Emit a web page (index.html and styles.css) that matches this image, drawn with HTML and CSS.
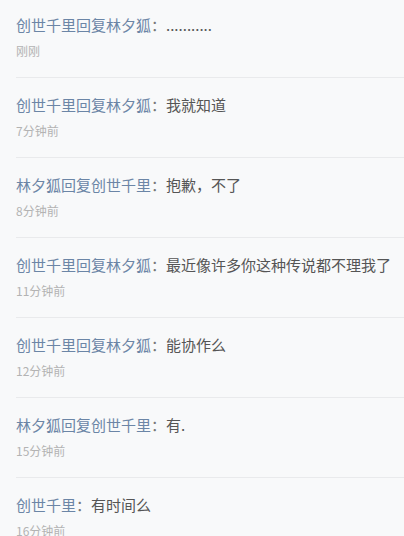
FILE: index.html
```html
<!DOCTYPE html>
<html lang="zh">
<head>
<meta charset="utf-8">
<link rel="stylesheet" href="styles.css">
</head>
<body>
<ul class="list">
  <li class="item">
    <p class="line"><span class="name">创世千里回复林夕狐</span><span class="colon">：</span><span class="msg">...........</span></p>
    <p class="time">刚刚</p>
  </li>
  <li class="item">
    <p class="line"><span class="name">创世千里回复林夕狐</span><span class="colon">：</span><span class="msg">我就知道</span></p>
    <p class="time">7分钟前</p>
  </li>
  <li class="item">
    <p class="line"><span class="name">林夕狐回复创世千里</span><span class="colon">：</span><span class="msg">抱歉，不了</span></p>
    <p class="time">8分钟前</p>
  </li>
  <li class="item">
    <p class="line"><span class="name">创世千里回复林夕狐</span><span class="colon">：</span><span class="msg">最近像许多你这种传说都不理我了</span></p>
    <p class="time">11分钟前</p>
  </li>
  <li class="item">
    <p class="line"><span class="name">创世千里回复林夕狐</span><span class="colon">：</span><span class="msg">能协作么</span></p>
    <p class="time">12分钟前</p>
  </li>
  <li class="item">
    <p class="line"><span class="name">林夕狐回复创世千里</span><span class="colon">：</span><span class="msg">有.</span></p>
    <p class="time">15分钟前</p>
  </li>
  <li class="item">
    <p class="line"><span class="name">创世千里</span><span class="colon">：</span><span class="msg">有时间么</span></p>
    <p class="time">16分钟前</p>
  </li>
</ul>
</body>
</html>
```
FILE: styles.css
```css
html, body {
  margin: 0;
  padding: 0;
  background: #f8f9fa;
  font-family: "Noto Sans CJK SC", "Noto Sans", sans-serif;
  overflow: hidden;
}
.list {
  list-style: none;
  margin: -2px 0 0 0;
  padding: 0 0 0 16px;
}
.item {
  padding: 16px 0 17px 0;
  border-bottom: 1px solid #e9eaec;
}
.line {
  margin: 0;
  font-size: 15px;
  line-height: 22px;
  white-space: nowrap;
}
.name {
  color: #6b85a6;
}
.colon {
  color: #777;
}
.msg {
  color: #555;
}
.time {
  margin: 6px 0 0 0;
  font-size: 12px;
  line-height: 18px;
  color: #b3b3b3;
}
```
